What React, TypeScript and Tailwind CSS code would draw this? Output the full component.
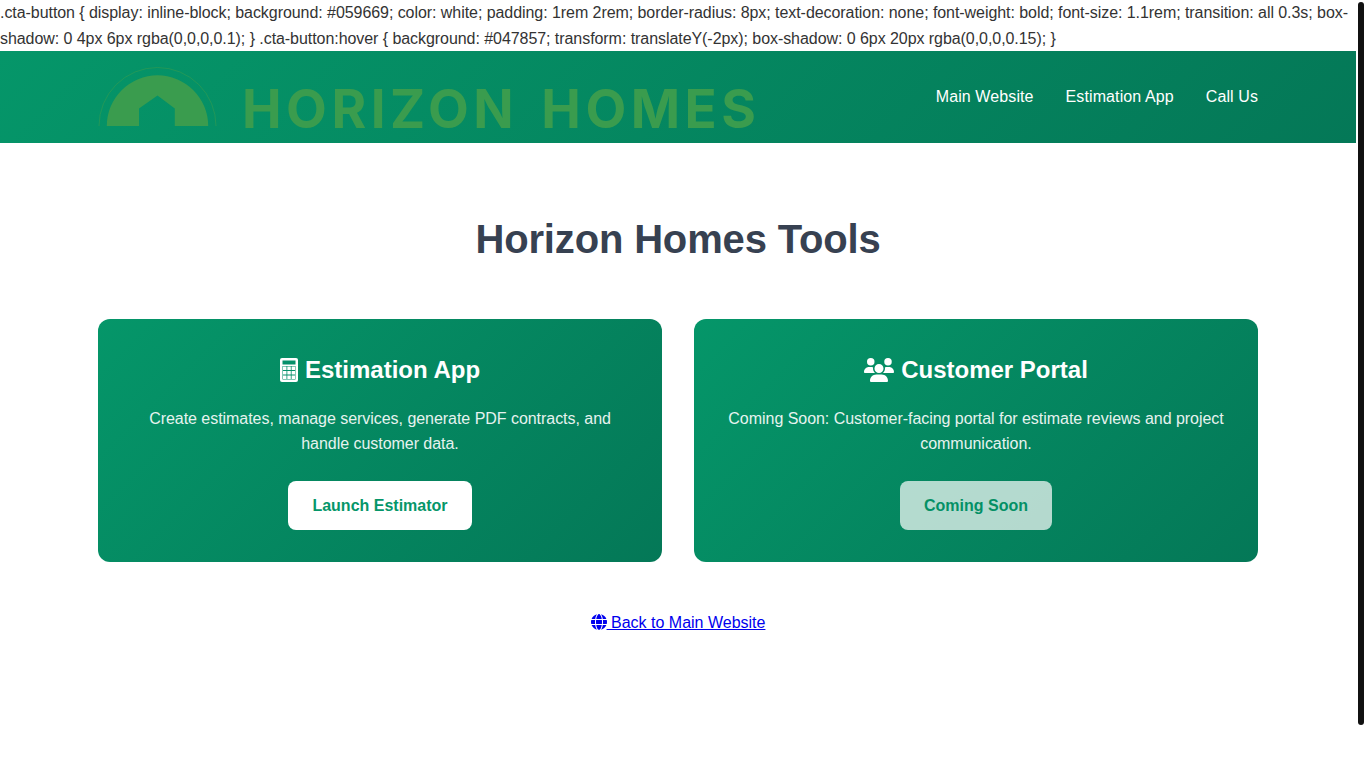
import { FaGlobe, FaUsers } from "react-icons/fa6"
import type { ReactNode } from "react"

function CalculatorIcon() {
  return (
    <svg width="18" height="24" viewBox="0 0 18 24" className="shrink-0" aria-hidden="true">
      <rect width="18" height="24" rx="2" fill="white" />
      <rect x="2.5" y="2.5" width="13" height="4" fill="#05906a" />
      <rect x="2.5" y="8" width="13" height="13.5" fill="#05906a" />
      <path d="M3 8.5h3.5v3.6h-3.5zM7.3 8.5h3.5v3.6h-3.5zM11.6 8.5h3.5v3.6h-3.5zM3 13h3.5v3.6h-3.5zM7.3 13h3.5v3.6h-3.5zM11.6 13h3.5v3.6h-3.5zM3 17.5h3.5v3.6h-3.5zM7.3 17.5h3.5v3.6h-3.5zM11.6 17.5h3.5v3.6h-3.5z" fill="white" />
    </svg>
  )
}

function Logo() {
  return (
    <div className="flex items-center h-[92px] pt-[24px]">
      <svg width="120" height="60" viewBox="0 0 120 60" className="mb-[25px] block shrink-0" aria-hidden="true">
        <path d="M1 59 A58.5 58.5 0 0 1 118 59" fill="none" stroke="#3a9c4e" strokeOpacity="0.7" strokeWidth="0.8" />
        <path d="M8.8 59 A50.7 50.7 0 0 1 110.2 59 H76.8 V41.5 L59.5 28.5 L41 41.5 V59 Z" fill="#3a9c4e" />
      </svg>
      <span className="ml-[24px] font-['Inter',sans-serif] font-bold text-[53px] leading-none tracking-[4.5px] [word-spacing:6px] text-[#3a9c4e] whitespace-nowrap">
        HORIZON HOMES
      </span>
    </div>
  )
}

function ToolCard(props: { icon: ReactNode; title: string; text: string; button: string; muted?: boolean }) {
  return (
    <div className="rounded-[12px] bg-[linear-gradient(135deg,#059669,#047857)] p-8 text-center text-white">
      <h3 className="mb-4 flex items-center justify-center gap-[7px] text-2xl leading-[1.6] font-bold">
        {props.icon}
        {props.title}
      </h3>
      <p className="mb-6 tracking-[-0.04px] opacity-90">{props.text}</p>
      <a
        href="#"
        className={
          props.muted
            ? "inline-block rounded-lg bg-white px-6 py-3 font-bold text-[#059669] opacity-70"
            : "inline-block rounded-lg bg-white px-6 py-3 font-bold text-[#059669]"
        }
      >
        {props.button}
      </a>
    </div>
  )
}

export default function App() {
  return (
    <div className="flex h-screen overflow-hidden bg-white font-['Liberation_Sans',Arial,sans-serif] text-base leading-[1.6] text-[#333333]">
      <div className="min-w-0 flex-1">
        <div className="tracking-[-0.06px]">
          .cta-button {"{"} display: inline-block; background: #059669; color: white; padding: 1rem 2rem; border-radius: 8px; text-decoration: none; font-weight: bold; font-size: 1.1rem; transition: all 0.3s; box-shadow: 0 4px 6px rgba(0,0,0,0.1); {"}"} .cta-button:hover {"{"} background: #047857; transform: translateY(-2px); box-shadow: 0 6px 20px rgba(0,0,0,0.15); {"}"}
        </div>

        <header className="h-[92px] overflow-hidden bg-[linear-gradient(135deg,#059669,#047857)]">
          <div className="mx-auto flex h-full max-w-[1200px] items-center justify-between px-5">
            <Logo />
            <nav className="flex gap-8 tracking-[0.1px] text-white">
              <a href="#">Main Website</a>
              <a href="#">Estimation App</a>
              <a href="#">Call Us</a>
            </nav>
          </div>
        </header>

        <main className="mx-auto max-w-[1200px] px-5 pt-16">
          <h1 className="mb-12 text-center text-[40px] leading-[1.6] font-bold tracking-[-0.16px] text-[#374151]">Horizon Homes Tools</h1>

          <div className="mb-12 grid grid-cols-2 gap-8">
            <ToolCard
              icon={<CalculatorIcon />}
              title="Estimation App"
              text="Create estimates, manage services, generate PDF contracts, and handle customer data."
              button="Launch Estimator"
            />
            <ToolCard
              icon={<FaUsers className="h-6 w-[30px]" />}
              title="Customer Portal"
              text="Coming Soon: Customer-facing portal for estimate reviews and project communication."
              button="Coming Soon"
              muted
            />
          </div>

          <div className="text-center">
            <a href="#" className="text-[#0000ee] underline">
              <FaGlobe className="inline-block h-4 w-4 align-[-2px]" /> Back to Main Website
            </a>
          </div>
        </main>
      </div>

      {/* overlay scrollbar from the screenshot */}
      <div className="w-[10px] shrink-0 px-[2px] pt-[2px]">
        <div className="h-[723px] w-[6px] rounded-full bg-[#111111]"></div>
      </div>
    </div>
  )
}
